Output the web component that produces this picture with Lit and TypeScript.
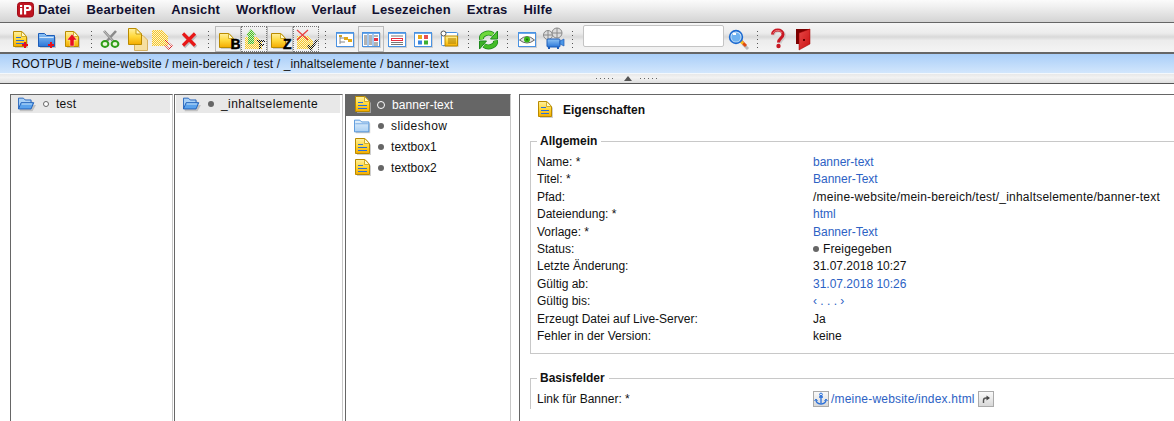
import { LitElement, html, css, svg } from "lit";
import { customElement } from "lit/decorators.js";

const defs = svg`<defs>
<linearGradient id="gy" x1="0" y1="0" x2="0" y2="1"><stop offset="0" stop-color="#fff0a0"/><stop offset=".5" stop-color="#ffd83a"/><stop offset="1" stop-color="#f4ab00"/></linearGradient>
<linearGradient id="gb" x1="0" y1="0" x2="0" y2="1"><stop offset="0" stop-color="#8fc4f5"/><stop offset="1" stop-color="#2a76d8"/></linearGradient>
<linearGradient id="gl" x1="0" y1="0" x2="0" y2="1"><stop offset="0" stop-color="#e4f1fc"/><stop offset="1" stop-color="#a9cff3"/></linearGradient>
<linearGradient id="gr" x1="0" y1="0" x2="1" y2="1"><stop offset="0" stop-color="#e84848"/><stop offset="1" stop-color="#c80f0f"/></linearGradient>
<pattern id="dy" width="2" height="2" patternUnits="userSpaceOnUse"><rect width="2" height="2" fill="#fff6c4"/><rect width="1" height="1" fill="#f2c230"/><rect x="1" y="1" width="1" height="1" fill="#f2c230"/></pattern>
<pattern id="dk" width="2" height="2" patternUnits="userSpaceOnUse"><rect width="1" height="1" fill="#111"/><rect x="1" y="1" width="1" height="1" fill="#111"/></pattern>
<pattern id="dr" width="2" height="2" patternUnits="userSpaceOnUse"><rect width="1" height="1" fill="#e02020"/><rect x="1" y="1" width="1" height="1" fill="#e02020"/></pattern>
<pattern id="dg" width="2" height="2" patternUnits="userSpaceOnUse"><rect width="2" height="2" fill="#d4f4b8"/><rect width="1" height="1" fill="#44b82c"/><rect x="1" y="1" width="1" height="1" fill="#44b82c"/></pattern>
</defs>`;

const ic = (w: number, h: number, c: unknown) =>
  html`<svg width=${w} height=${h} viewBox="0 0 ${w} ${h}" style="display:block">${defs}${c}</svg>`;

const docShape = (x: number, y: number, w = 14, h = 16, lines = true, fill = "url(#gy)") => svg`
  <g transform="translate(${x} ${y})">
    <path d="M2 2H${w - 3}L${w + 1} 7V${h + 1}H2Z" fill="#bbb" opacity=".7"/>
    <path d="M.5 .5H${w - 5}L${w - .5} 5.5V${h - .5}H.5Z" fill=${fill} stroke="#b98a00"/>
    <path d="M${w - 5.5} .5V5.5H${w - .5}Z" fill="#fff8c8" stroke="#c49a10" stroke-width=".8"/>
    ${lines
      ? svg`<path d="M3 6.5H8M3 9.5H${w - 3}M3 12.5H${w - 3}" stroke="#2a6fd8" stroke-width="1.2"/>`
      : ""}
  </g>`;

const folderShape = (x: number, y: number, light = false) => svg`
  <g transform="translate(${x} ${y})">
    <path d="M2 3H8L10 5H18V16H2Z" fill="#aaa" opacity=".6"/>
    <path d="M.5 14.5V1.5H6.5L8.5 3.5H16.5V14.5Z" fill=${light ? "url(#gl)" : "url(#gb)"} stroke=${light ? "#4a8ed8" : "#1c5cb8"}/>
    <path d="M1.5 5.5H15.5" stroke=${light ? "#4a8ed8" : "#fff"} stroke-opacity=".7"/>
  </g>`;

const openFolder = (x: number, y: number) => svg`
  <g transform="translate(${x} ${y})">
    <path d="M2 3H8L10 5H16V9H20L16 16H2Z" fill="#999" opacity=".5"/>
    <path d="M.5 13.5V1.5H6L8 3.5H14.5V6.5" fill="#a8d0f6" stroke="#1c5cb8"/>
    <path d="M.5 13.5L3.5 6.5H17.5L14.5 13.5Z" fill="#5aa2ec" stroke="#1c5cb8"/>
    <path d="M4 8H15.5" stroke="#d8ecfc"/>
  </g>`;

const redPlus = (x: number, y: number) => svg`<path transform="translate(${x} ${y})" d="M2 0H4V2H6V4H4V6H2V4H0V2H2Z" fill="#e8101c"/>`;
const frame = (c: unknown) => svg`
  <rect x="5" y="7" width="18" height="15" fill="#bbb" opacity=".6"/>
  <rect x="4.5" y="6.5" width="17" height="14" fill="#fff" stroke="#4a92e2"/>
  <path d="M5 7H21" stroke="#4a92e2" stroke-width="1.6"/>
  ${c}`;

const icons: Record<string, unknown> = {
  newDoc: ic(26, 26, svg`${docShape(6, 5)}${redPlus(15, 16)}`),
  newFolder: ic(26, 26, svg`${folderShape(5, 6)}${redPlus(15, 16)}`),
  upload: ic(26, 26, svg`${docShape(6, 5, 14, 16, false)}<path d="M13 8L18 14H15V20H11V14H8Z" fill="#e8101c" stroke="#fff" stroke-width=".4"/>`),
  cut: ic(26, 26, svg`
    <path d="M7 5L17 16M19 5L9 16" stroke="#8a8a8a" stroke-width="2.6"/>
    <path d="M7 5L17 16" stroke="#c8c8c8" stroke-width="1"/>
    <ellipse cx="8" cy="18" rx="3.4" ry="3" fill="#eaf8d8" stroke="#2f9e18" stroke-width="2"/>
    <ellipse cx="18" cy="18" rx="3.4" ry="3" fill="#eaf8d8" stroke="#2f9e18" stroke-width="2"/>`),
  copy: ic(26, 26, svg`
    <path d="M11.5 9.5H20L24.5 14V24.5H11.5Z" fill="#f6dfa0" stroke="#d6b060"/>
    <path d="M5.5 2.5H13L18.5 8V18.5H5.5Z" fill="url(#gy)" stroke="#b98a00"/>
    <path d="M13 2.5V8H18.5Z" fill="#fff6c0" stroke="#c49a10"/>`),
  paste: ic(26, 26, svg`
    <path d="M3 4H13L19 10V20H3Z" fill="url(#dy)"/>
    <path d="M16 14L23 20L20 23L16 19" fill="none" stroke="url(#dr)" stroke-width="1.6"/>`),
  del: ic(26, 26, svg`
    <path d="M9 9L21 21M21 9L9 21" stroke="#bbb" stroke-width="3.4"/>
    <path d="M8 7.5L20 19.5M20 7.5L8 19.5" stroke="#e81818" stroke-width="3.2"/>`),
  b: ic(26, 26, svg`${docShape(4, 7, 15, 15, false)}<text x="15.5" y="23" class="big">B</text>`),
  pub: ic(26, 26, svg`
    <path d="M4 11H16L21 16V23H4Z" fill="url(#dy)"/>
    <path d="M10 3L15 9H13V18H7V9H5Z" fill="url(#dg)"/>
    <path d="M16 14H24V16H20V18H23V20H20V23H18V16H16Z" fill="url(#dk)"/>`),
  z: ic(26, 26, svg`${docShape(4, 7, 15, 15, false)}<text x="16" y="23" class="big">Z</text>`),
  unpub: ic(26, 26, svg`
    <path d="M4 10H15L20 15V23H4Z" fill="url(#dy)"/>
    <path d="M4 4L15 14M15 4L4 14" stroke="#e84040" stroke-width="1.3"/>
    <path d="M15 19L18 23L24 14" fill="none" stroke="url(#dk)" stroke-width="2.6"/>`),
  tree: ic(26, 26, frame(svg`
    <path d="M8 9V18M8 12H13M8 16H13" stroke="#888" fill="none"/>
    <rect x="7" y="9" width="3" height="2" fill="#c8a030"/>
    <rect x="12" y="11" width="4" height="3" fill="#e2a818"/><rect x="16" y="13" width="4" height="3" fill="#e2a818"/>`)),
  cols: ic(26, 26, frame(svg`
    <path d="M6 10H9M6 12H9M6 14H9M6 16H9M6 18H9M11 10H14M11 12H14M11 14H14M11 16H14M11 18H14M16 10H20M16 17H20M16 19H20" stroke="#666"/>
    <path d="M10 8V20M15 8V20" stroke="#4a92e2"/>
    <rect x="16" y="12" width="4" height="3" fill="#e83040"/>`)),
  list: ic(26, 26, frame(svg`
    <path d="M7 10H19M7 16.5H19M7 18.5H19" stroke="#777"/>
    <rect x="7.5" y="12.5" width="11" height="2" fill="#fff" stroke="#e83040"/>`)),
  grid: ic(26, 26, frame(svg`
    <rect x="8" y="9" width="4" height="4" fill="#e8a818"/><rect x="14" y="9" width="4" height="4" fill="#e85050"/>
    <rect x="8" y="14.5" width="4" height="4" fill="#3b86de"/><rect x="14" y="14.5" width="4" height="4" fill="#3cb030"/>`)),
  tag: ic(26, 26, svg`
    <path d="M7 7H23V21H7Z" fill="#bbb" opacity=".5"/>
    <rect x="5.5" y="6.5" width="16" height="13" rx="1" fill="#fff" stroke="#4a92e2"/>
    <path d="M9 10H21.5V20H9Z" fill="url(#gy)" stroke="#b98a00"/>
    <circle cx="7.5" cy="7.5" r="2.5" fill="#fff" stroke="#555"/>
    <path d="M12 13H20M12 15H20M12 17H20" stroke="#a87800"/>`),
  sync: ic(26, 26, svg`
    <path d="M6.5 13.5A7 5.5 0 0 1 18 8.5" fill="none" stroke="#1e8a1e" stroke-width="5"/>
    <path d="M15.5 13H22.5V5Z" fill="#4cc22c" stroke="#1e8a1e"/>
    <path d="M6.5 13.5A7 5.5 0 0 1 18 8.5" fill="none" stroke="#6ed83c" stroke-width="3.4"/>
    <path d="M20.5 14.5A7 5.5 0 0 1 9 19.5" fill="none" stroke="#1e8a1e" stroke-width="5"/>
    <path d="M11.5 15H4.5V23Z" fill="#3cb028" stroke="#1e8a1e"/>
    <path d="M20.5 14.5A7 5.5 0 0 1 9 19.5" fill="none" stroke="#44bc28" stroke-width="3.4"/>`),
  eye: ic(26, 26, frame(svg`
    <path d="M5.5 14Q13 7 20.5 14Q13 20 5.5 14Z" fill="#e4e4e4" stroke="#666"/>
    <circle cx="13" cy="13.5" r="3" fill="#38b818"/><circle cx="13" cy="13.5" r="1" fill="#1a6a10"/>`)),
  film: ic(26, 26, svg`
    <circle cx="8" cy="9" r="4.5" fill="#ddd" stroke="#8a8a8a"/><path d="M8 4.5V13.5M3.5 9H12.5" stroke="#8a8a8a"/>
    <circle cx="17" cy="7" r="5" fill="#ddd" stroke="#8a8a8a"/><path d="M17 2V12M12 7H22" stroke="#8a8a8a"/>
    <rect x="7" y="13" width="13" height="8" rx="1" fill="url(#gb)" stroke="#1c5cb8"/>
    <path d="M20 15L24 13V20L20 18Z" fill="#4a96e6" stroke="#1c5cb8" stroke-width=".7"/>
    <path d="M9 21V23M18 21V23" stroke="#1c5cb8" stroke-width="2"/>`),
  search: ic(26, 26, svg`
    <path d="M18 18L23 23" stroke="#bbb" stroke-width="3"/>
    <path d="M16 15L21 20" stroke="#e04a10" stroke-width="3"/>
    <path d="M15.5 15L18 17.5" stroke="#f5c020" stroke-width="3"/>
    <circle cx="11" cy="11" r="6.4" fill="url(#gl)" stroke="#1c6ad0" stroke-width="1.6"/>
    <circle cx="11" cy="11" r="4.6" fill="#6fb2f0"/>
    <rect x="8" y="7" width="3" height="2" fill="#fff"/>`),
  help: ic(26, 26, svg`
    <path d="M9.5 9.5C9.5 3.5 20.5 3.5 20.5 9.5C20.5 13 16 13.5 16 17.5" fill="none" stroke="#ccc" stroke-width="3"/>
    <path d="M8.5 8.5C8.5 2.5 19 2.5 19 8.5C19 12 14.5 12.5 14.5 16.5" fill="none" stroke="#c81824" stroke-width="3"/>
    <path d="M9 7.5C10 3.5 17 3.5 18 7" fill="none" stroke="#f09090" stroke-width=".8"/>
    <circle cx="14.5" cy="20" r="2.2" fill="#c81824"/>`),
  door: ic(26, 26, svg`
    <rect x="6" y="3" width="14" height="15" fill="#7a0000"/>
    <path d="M9 7L20 3V18L9 24Z" fill="url(#gr)" stroke="#a00000" stroke-width=".5"/>
    <rect x="13" y="13" width="2" height="2" fill="#6a0000"/>`),
  docSm: ic(16, 18, docShape(0, 0, 14, 16)),
  docRow: ic(18, 18, docShape(1, 0, 15, 16)),
  folderOpen: ic(20, 18, openFolder(0, 1)),
  folderLight: ic(20, 18, folderShape(0, 1, true)),
  logo: ic(17, 16, svg`
    <rect x=".5" y=".5" width="16" height="14.5" rx="3" fill="#c01420" stroke="#a00c18"/>
    <rect x="3" y="6" width="2.2" height="6.5" fill="#fff"/><rect x="3" y="3" width="2.2" height="2" fill="#fff"/>
    <path d="M7 12.5V3H11.5A2.8 2.8 0 0 1 11.5 9H9.2V12.5Z M9.2 5V7H11A1 1 0 0 0 11 5Z" fill="#fff" fill-rule="evenodd"/>`),
  anchor: ic(16, 16, svg`
    <path d="M8 4V12M6 6H10M3 9Q3 12.5 8 13Q13 12.5 13 9" fill="none" stroke="#2a6fd8" stroke-width="1.3"/>
    <circle cx="8" cy="3.5" r="1.4" fill="none" stroke="#2a6fd8"/>
    <path d="M1.5 10L3 8L4.5 10M11.5 10L13 8L14.5 10" fill="none" stroke="#2a6fd8"/>`),
  out: ic(16, 16, svg`
    <path d="M5.5 12V9.5Q5.5 7 8 7H9" fill="none" stroke="#555" stroke-width="1.4"/>
    <path d="M8.5 4.5L12 7L8.5 9.5Z" fill="#444"/>`),
};

type Tb = { i?: string; k?: string; s?: number };
const toolbar: Tb[] = [
  { i: "newDoc" }, { i: "newFolder" }, { i: "upload" }, { s: 12 },
  { i: "cut" }, { i: "copy" }, { i: "paste" }, { i: "del" }, { s: 14 },
  { i: "b", k: "pressed" }, { i: "pub", k: "dotted" }, { i: "z", k: "pressed" }, { i: "unpub", k: "dotted" }, { s: 13 },
  { i: "tree" }, { i: "cols", k: "pressed" }, { i: "list" }, { i: "grid" }, { i: "tag" }, { s: 13 },
  { i: "sync" }, { s: 13 },
  { i: "eye" }, { i: "film" }, { s: 12 },
];
const toolbarEnd: Tb[] = [{ i: "search" }, { s: 13 }, { i: "help" }, { i: "door" }];

const menus = ["Datei", "Bearbeiten", "Ansicht", "Workflow", "Verlauf", "Lesezeichen", "Extras", "Hilfe"];

type Row = { l: string; v: unknown; cls?: string };
const rows: Row[] = [
  { l: "Name: *", v: "banner-text", cls: "link" },
  { l: "Titel: *", v: "Banner-Text", cls: "link" },
  { l: "Pfad:", v: "/meine-website/mein-bereich/test/_inhaltselemente/banner-text", cls: "wide" },
  { l: "Dateiendung: *", v: "html", cls: "link" },
  { l: "Vorlage: *", v: "Banner-Text", cls: "link" },
  { l: "Status:", v: html`<span class="bul"></span>Freigegeben`, cls: "stt" },
  { l: "Letzte Änderung:", v: "31.07.2018 10:27" },
  { l: "Gültig ab:", v: "31.07.2018 10:26", cls: "link" },
  { l: "Gültig bis:", v: "‹ . . . ›", cls: "link" },
  { l: "Erzeugt Datei auf Live-Server:", v: "Ja" },
  { l: "Fehler in der Version:", v: "keine" },
];

@customElement("app-root")
export class AppRoot extends LitElement {
  static styles = css`
    :host {
      display: block;
      width: 1174px;
      height: 421px;
      overflow: hidden;
      background: #fff;
      font-family: "Liberation Sans", Arial, sans-serif;
      font-size: 12px;
      color: #111;
    }
    svg text.big { font: 900 14px "Liberation Sans", Arial, sans-serif; stroke: #000; stroke-width: .5px; fill: #000; }
    .menubar {
      height: 23px;
      display: flex;
      align-items: center;
      padding: 0 0 3px 17px;
      box-sizing: border-box;
      background: linear-gradient(#fbfbfb, #f2f2f2 25%, #d4d4d4);
      border-bottom: 1px solid #666;
    }
    .logo { margin-right: 4px; }
    .menu { font-weight: bold; font-size: 13px; margin-right: 16px; color: #111030; letter-spacing: .15px; }
    .toolbar {
      height: 31px;
      box-sizing: border-box;
      display: flex;
      align-items: flex-start;
      padding: 3px 0 0 7px;
      background: linear-gradient(#f6f6f6, #ececec 35%, #d9d9d9 48%, #ececec 60%, #f4f4f4);
      border-bottom: 2px solid #666;
    }
    .btn { width: 26px; height: 26px; box-sizing: border-box; flex: none; }
    .btn.pressed { outline: 1px solid #bbb; outline-offset: -1px; border-top: 1px solid #777; border-left: 1px solid #777; }
    .btn.pressed svg { margin: -1px 0 0 -1px; }
    .btn.dotted { outline: 1px dotted #777; outline-offset: -1px; }
    .sep { flex: none; display: flex; justify-content: center; height: 26px; align-items: center; }
    .sep i {
      display: block; width: 1px; height: 17px;
      background: repeating-linear-gradient(#555 0 1px, transparent 1px 4px);
    }
    .search {
      width: 141px; height: 22px; box-sizing: border-box; flex: none; margin: -1px 1px 0 5px;
      background: #fff; border: 1px solid #c4c4c4; border-radius: 2px;
    }
    .crumb {
      height: 20px;
      box-sizing: border-box;
      padding: 2px 0 0 12px;
      line-height: 16px;
      letter-spacing: .13px;
      background: linear-gradient(#a9cef8, #d2e6fc);
      border-bottom: 1px solid #f4f8fc;
    }
    .splitter {
      height: 10px;
      box-sizing: border-box;
      display: flex;
      align-items: center;
      padding-left: 596px;
      background: linear-gradient(#e8e8e8, #f2f2f2 40%, #dedede);
      border-bottom: 1px solid #555;
    }
    .sp-dots { width: 17px; height: 1px; background: repeating-linear-gradient(90deg, #666 0 1px, transparent 1px 4px); }
    .sp-tri { width: 0; height: 0; margin: 0 8px 0 11px; border-left: 4px solid transparent; border-right: 4px solid transparent; border-bottom: 5px solid #555; }
    .main {
      display: flex;
      align-items: stretch;
      height: 337px;
      padding: 10px 0 0 10px;
      box-sizing: border-box;
    }
    .pane {
      flex: none;
      box-sizing: border-box;
      border-top: 1px solid #666;
      border-left: 1px solid #666;
      border-right: 1px solid #c8c8c8;
      margin-right: 1px;
    }
    .p1 { width: 163px; padding-right: 2px; }
    .p2 { width: 169px; padding: 0 2px 0 1px; }
    .p3 { width: 166px; margin-left: 1px; margin-right: 8px; }
    .row {
      display: flex;
      align-items: center;
      height: 21px;
      box-sizing: border-box;
      white-space: nowrap;
      padding-bottom: 1px;
    }
    .row.sel { height: 18px; background: #e8e8e8; padding-bottom: 0; }
    .row.cur { background: #666; color: #fff; }
    .row.f1, .row.f2 { padding-left: 7px; }
    .row.f3 { padding-left: 8px; }
    .ic-slot { width: 18px; display: flex; flex: none; }
    .stat { width: 6px; height: 6px; border-radius: 50%; box-sizing: border-box; flex: none; margin: 0 7px; background: #666; }
    .stat.open { background: #fff; border: 1px solid #666; }
    .f3 .stat { margin-left: 6px; }
    .cur .stat.open { width: 8px; height: 8px; background: #666; border: 1.3px solid #fff; margin: 0 7px 0 5px; }
    .txt { letter-spacing: .25px; }
    .txt.tight { letter-spacing: .05px; }
    .txt.loose { letter-spacing: .4px; }
    .content {
      flex: 1;
      box-sizing: border-box;
      border-top: 1px solid #666;
      border-left: 1px solid #666;
      padding: 6px 0 0 18px;
      overflow: hidden;
    }
    .head { display: flex; align-items: center; height: 17px; font-weight: bold; gap: 9px; }
    .head svg { margin-top: 1px; }
    fieldset {
      margin: 0 -20px 0 -8px;
      padding: 0 0 0 6px;
      border: 0;
      border-top: 1px solid #c8c8c8;
      border-left: 1px solid #c8c8c8;
      border-bottom: 1px solid #c8c8c8;
      min-width: 0;
    }
    fieldset.a { margin-top: 16px; height: 218px; }
    fieldset.b { margin-top: 17px; border-bottom: 0; }
    legend { font-weight: bold; padding: 0 4px 0 3px; margin-left: 0; line-height: 14px; }
    .grid { display: grid; grid-template-columns: 276px 1fr; grid-auto-rows: 17.4px; align-items: center; line-height: 14px; padding-top: 5.4px; }
    .grid.b { grid-auto-rows: 20px; padding-top: 4px; }
    .link { color: #2d62c4; }
    .wide { letter-spacing: .21px; }
    .stt { letter-spacing: .12px; display: flex; align-items: center; }
    .bul { width: 6px; height: 6px; border-radius: 50%; background: #666; margin-right: 4px; flex: none; }
    .linkcell { display: flex; align-items: center; gap: 2px; }
    .linkcell .link { letter-spacing: .2px; }
    .sq {
      width: 16px; height: 16px; box-sizing: border-box; flex: none;
      background: linear-gradient(#fafafa, #d8d8d8);
      border: 1px solid #aaa;
    }
    .sq svg { margin: -1px; }
    .sq.r { margin-left: 1px; }
  `;

  private tb(items: Tb[]) {
    return items.map((t) =>
      t.s
        ? html`<div class="sep" style="width:${t.s}px"><i></i></div>`
        : html`<div class="btn ${t.k ?? ""}">${icons[t.i!]}</div>`
    );
  }

  render() {
    return html`
      <div class="menubar">
        <div class="logo">${icons.logo}</div>
        ${menus.map((m) => html`<span class="menu">${m}</span>`)}
      </div>
      <div class="toolbar">
        ${this.tb(toolbar)}
        <div class="search"></div>
        ${this.tb(toolbarEnd)}
      </div>
      <div class="crumb">ROOTPUB / meine-website / mein-bereich / test / _inhaltselemente / banner-text</div>
      <div class="splitter"><span class="sp-dots"></span><span class="sp-tri"></span><span class="sp-dots"></span></div>
      <div class="main">
        <div class="pane p1">
          <div class="row sel f1">
            <div class="ic-slot">${icons.folderOpen}</div><span class="stat open"></span><span class="txt">test</span>
          </div>
        </div>
        <div class="pane p2">
          <div class="row sel f2">
            <div class="ic-slot">${icons.folderOpen}</div><span class="stat"></span><span class="txt loose">_inhaltselemente</span>
          </div>
        </div>
        <div class="pane p3">
          <div class="row cur f3"><div class="ic-slot">${icons.docRow}</div><span class="stat open"></span><span class="txt tight">banner-text</span></div>
          <div class="row f3"><div class="ic-slot">${icons.folderLight}</div><span class="stat"></span><span class="txt loose">slideshow</span></div>
          <div class="row f3"><div class="ic-slot">${icons.docRow}</div><span class="stat"></span><span class="txt tight">textbox1</span></div>
          <div class="row f3"><div class="ic-slot">${icons.docRow}</div><span class="stat"></span><span class="txt tight">textbox2</span></div>
        </div>
        <div class="content">
          <div class="head">${icons.docSm}<span>Eigenschaften</span></div>
          <fieldset class="a">
            <legend>Allgemein</legend>
            <div class="grid">
              ${rows.map((r) => html`<div>${r.l}</div><div class=${r.cls ?? ""}>${r.v}</div>`)}
            </div>
          </fieldset>
          <fieldset class="b">
            <legend>Basisfelder</legend>
            <div class="grid b">
              <div>Link für Banner: *</div>
              <div class="linkcell">
                <div class="sq">${icons.anchor}</div>
                <span class="link">/meine-website/index.html</span>
                <div class="sq r">${icons.out}</div>
              </div>
            </div>
          </fieldset>
        </div>
      </div>
    `;
  }
}
